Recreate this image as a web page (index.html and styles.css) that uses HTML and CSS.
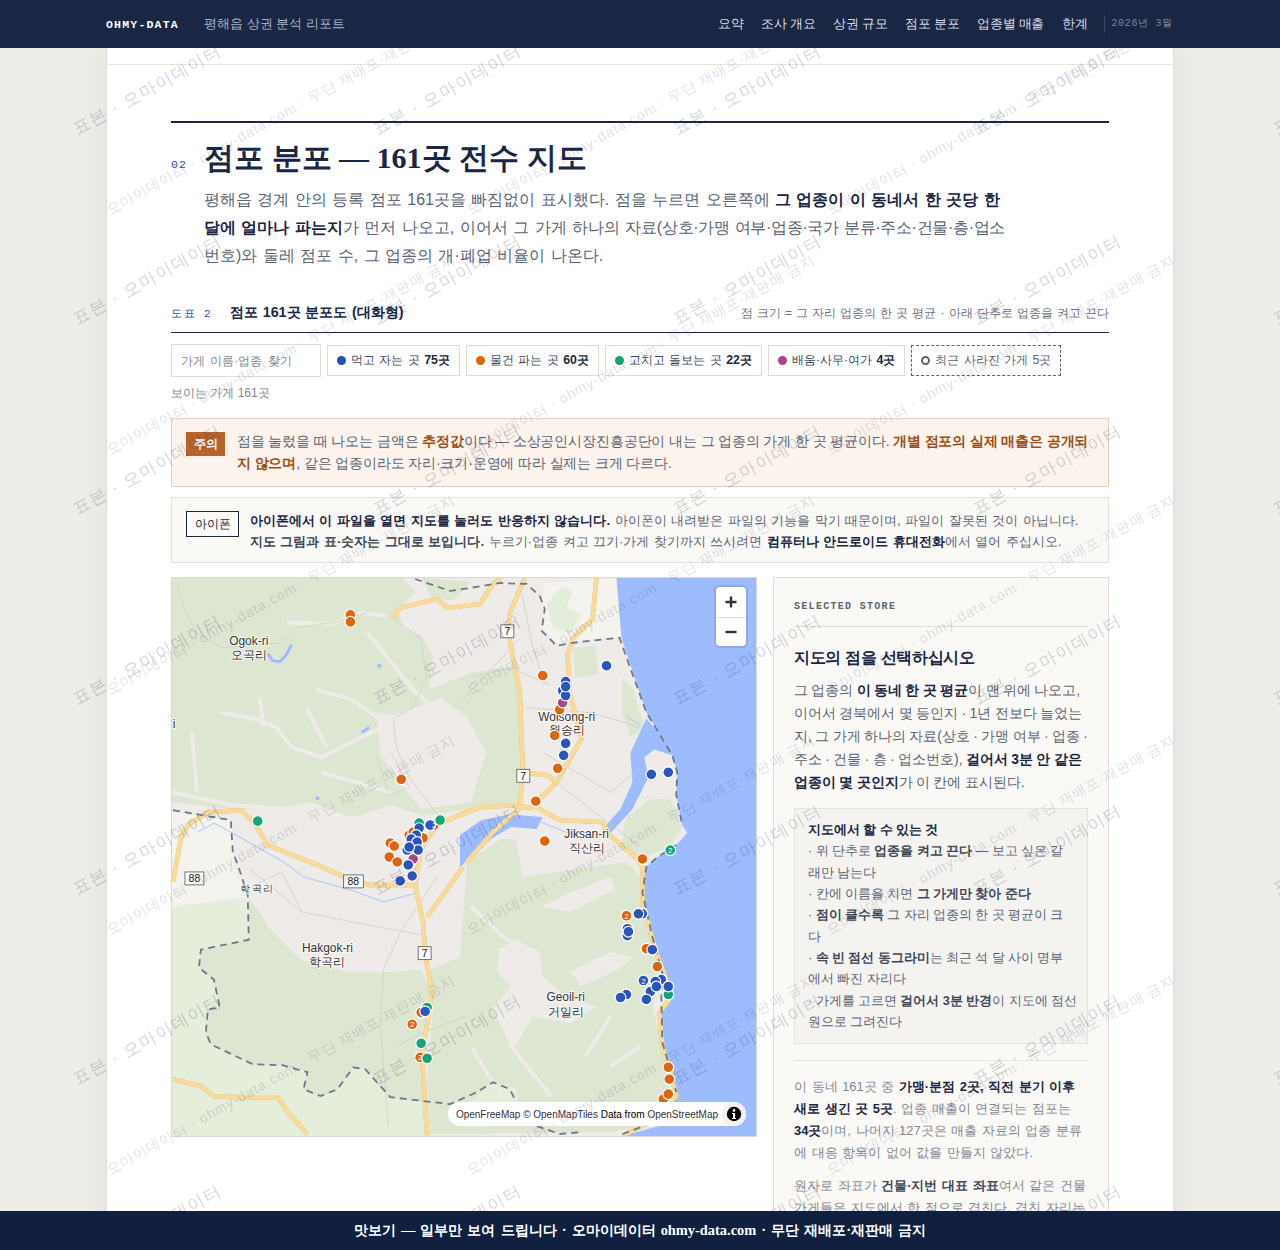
FILE: index.html
```html
<!DOCTYPE html>
<html lang="ko">
<head>
    <meta charset="UTF-8">
    <meta name="viewport" content="width=device-width, initial-scale=1.0">
    <title>평해읍 상권 분석 리포트</title>
    <link rel="stylesheet" href="styles.css">
</head>
<body>
    <header class="topbar">
        <div class="topbar-inner">
            <span class="brand">OHMY-DATA</span>
            <span class="report-name">평해읍 상권 분석 리포트</span>
            <nav class="topnav">
                <a href="#">요약</a>
                <a href="#">조사 개요</a>
                <a href="#">상권 규모</a>
                <a href="#">점포 분포</a>
                <a href="#">업종별 매출</a>
                <a href="#">한계</a>
            </nav>
            <span class="issue-date">2026년 3월</span>
        </div>
    </header>

    <div class="sheet">
        <div class="sheet-strip"></div>
        <main class="section">
            <div class="section-head">
                <span class="section-no">02</span>
                <h1>점포 분포 — 161곳 전수 지도</h1>
            </div>
            <p class="lede">평해읍 경계 안의 등록 점포 161곳을 빠짐없이 표시했다. 점을 누르면 오른쪽에 <b>그 업종이 이 동네서 한 곳당 한 달에 얼마나 파는지</b>가 먼저 나오고, 이어서 그 가게 하나의 <span class="tight">자료(상호·가맹 여부·업종·국가 분류·주소·건물·층·업소</span>번호)와 둘레 점포 수, 그 업종의 개·폐업 비율이 나온다.</p>

            <div class="figure-head">
                <span class="figure-no">도표 2</span>
                <span class="figure-title">점포 161곳 분포도 (대화형)</span>
                <span class="figure-note">점 크기 = 그 자리 업종의 한 곳 평균 · 아래 단추로 업종을 켜고 끈다</span>
            </div>

            <div class="filters">
                <input class="search" type="text" placeholder="가게 이름·업종 찾기">
                <button class="chip" type="button"><i class="swatch blue"></i>먹고 자는 곳 <b>75곳</b></button>
                <button class="chip" type="button"><i class="swatch orange"></i>물건 파는 곳 <b>60곳</b></button>
                <button class="chip" type="button"><i class="swatch green"></i>고치고 돌보는 곳 <b>22곳</b></button>
                <button class="chip" type="button"><i class="swatch purple"></i>배움·사무·여가 <b>4곳</b></button>
                <button class="chip chip-closed" type="button"><i class="swatch ring"></i>최근 사라진 가게 5곳</button>
            </div>
            <p class="visible-count">보이는 가게 161곳</p>

            <div class="notice notice-warn">
                <span class="tag tag-warn">주의</span>
                <p>점을 눌렀을 때 나오는 금액은 <b>추정값</b>이다 — 소상공인시장진흥공단이 내는 그 업종의 가게 한 곳 평균이다. <b>개별 점포의 실제 매출은 공개되지 않으며</b>, 같은 업종이라도 자리·크기·운영에 따라 실제는 크게 다르다.</p>
            </div>
            <div class="notice notice-plain">
                <span class="tag tag-plain">아이폰</span>
                <p><b>아이폰에서 이 파일을 열면 지도를 눌러도 반응하지 않습니다.</b> 아이폰이 내려받은 파일의 기능을 막기 때문이며, 파일이 잘못된 것이 아닙니다. <b class="soft">지도 그림과 표·숫자는 그대로 보입니다.</b> 누르기·업종 켜고 끄기·가게 찾기까지 쓰시려면 <b>컴퓨터나 안드로이드 휴대전화</b>에서 열어 주십시오.</p>
            </div>

            <div class="map-row">
                <div class="map">
                    <svg class="map-canvas" viewBox="0 0 586 560" preserveAspectRatio="none" aria-label="평해읍 점포 지도">
                        <rect width="586" height="560" fill="#eeebe8"/>
                        <!-- land -->
                        <polygon class="pale" points="0,235 60,243 62,290 76,320 0,335"/>
                        <polygon class="pale" points="372,5 422,2 446,1 451,58 402,64 386,66 372,50"/>
                        <polygon class="meadow" points="376,25 392,8 402,14 396,30 412,36 400,55 382,50"/>
                        <polygon class="forest" points="0,0 232,0 244,14 226,32 232,50 250,58 262,78 258,112 300,95 345,88 352,150 356,195 350,225 300,232 250,238 220,228 180,240 140,225 100,232 60,232 0,225"/>
                        <polygon class="forest" points="250,0 300,4 282,22 262,22"/>
                        <polygon class="forest" points="402,70 425,68 428,96 405,100"/>
                        <polygon class="forest" points="452,100 462,110 474,150 460,160 452,135"/>
                        <polygon class="forest" points="456,240 480,222 500,222 512,250 500,270 470,282 450,270"/>
                        <polygon class="forest" points="296,285 330,262 345,262 352,300 420,290 456,285 470,300 472,330 486,376 490,400 482,430 492,470 500,510 470,550 440,556 289,558 258,558 256,500 262,430 256,395 289,380"/>
                        <polygon class="meadow" points="0,330 76,320 77,363 29,373 27,391 42,403 48,431 36,433 34,456 39,468 81,488 136,496 132,513 149,520 166,513 182,491 194,493 219,521 258,528 258,560 0,560"/>
                        <polygon class="forest" points="77,320 99,353 129,383 179,396 212,396 250,393 262,420 251,480 256,527 219,521 194,493 182,491 166,513 149,520 132,513 136,496 111,489 81,488 39,468 34,456 36,433 48,431 42,403 27,391 29,373 77,363"/>
                        <polygon class="meadow" points="296,530 320,505 345,512 350,545 300,552"/>
                        <polygon class="bare" points="328,372 345,363 369,375 372,400 395,420 425,430 400,447 362,440 342,475 322,432 340,410 326,395"/>
                        <polygon class="bare" points="205,135 225,138 270,120 296,140 315,175 300,225 250,232 225,200 210,180"/>
                        <polygon class="bare" points="400,395 440,375 462,380 450,392 410,410"/>
                        <polygon class="bare" points="370,330 400,315 440,300 445,312 400,335"/>
                        <polyline class="valley" points="50,135 85,142 105,150 120,170 150,180 200,155 215,150"/>
                        <polyline class="valley" points="145,112 180,122 215,146"/>
                        <polyline class="valley" points="0,215 60,228 120,232"/>
                        <polyline class="valley" points="115,45 160,46 190,35 215,38"/>
                        <polyline class="valley" points="196,55 240,110 262,130"/>
                        <polyline class="valley" points="20,155 25,215"/>
                        <polyline class="valley" points="88,120 92,150"/>
                        <polyline class="valley" points="135,130 155,170"/>
                        <polyline class="valley" points="150,195 220,215"/>
                        <polyline class="valley" points="300,330 360,385 340,470 380,520"/>
                        <polyline class="valley" points="440,440 415,480"/>
                        <polyline class="valley" points="470,470 440,490"/>
                        <polyline class="valley" points="300,470 330,520"/>
                        <!-- water -->
                        <polygon class="water" points="446,0 586,0 586,560 452,560 489,550 506,520 502,500 492,466 491,433 502,416 492,396 482,360 472,316 476,290 486,281 506,268 517,256 512,248 506,218 507,195 502,178 476,135 451,60"/>
                        <polygon class="water" points="289,258 310,243 340,237 372,240 366,252 340,250 320,262 300,280 289,290"/>
                        <polygon class="water" points="476,141 492,160 502,178 484,172 474,180 478,200 462,232 440,256 432,252 450,232 462,205 460,175"/>
                        <polyline class="water-line med" points="96,76 101,83 108,84 114,78 120,67"/>
                        <polyline class="water-line" points="26,255 42,246 59,255 112,285 132,300 179,313 212,325 246,316"/>
                        <polyline class="water-line" points="370,245 395,255 432,258"/>
                        <polyline class="water-line" points="456,138 470,148"/>
                        <polyline class="water-line med" points="190,155 198,150"/>
                        <circle cx="208" cy="88" r="2" fill="#9dbcff"/>
                        <circle cx="146" cy="221" r="2" fill="#9dbcff"/>
                        <!-- small roads -->
                        <g class="lane">
                            <polyline points="5,5 12,30 25,55 50,70 110,65 125,50 165,44 195,35"/>
                            <polyline points="222,42 250,60 255,100 242,130 222,142 225,170 238,200 268,240"/>
                            <polyline points="205,178 218,218 238,210 220,175"/>
                            <polyline points="266,300 229,356 212,393 209,450 217,550"/>
                            <polyline points="79,293 130,335 180,345 250,358"/>
                            <polyline points="80,310 110,295 130,335"/>
                            <polyline points="300,100 340,90 380,108"/>
                            <polyline points="355,130 420,135 470,150"/>
                            <polyline points="372,175 440,215 465,195"/>
                            <polyline points="385,205 470,270"/>
                            <polyline points="225,470 255,455 295,440"/>
                            <polyline points="350,10 362,70 372,100"/>
                            <polyline points="289,125 350,60"/>
                        </g>
                        <!-- main roads -->
                        <g class="road">
                            <polyline points="354,0 339,35 337,53 349,115 352,195 349,231 322,255 296,285"/>
                            <polyline points="292,290 256,340"/>
                            <polyline points="146,288 173,300 196,308 244,308 252,346 254,378 261,416 251,480 256,560"/>
                            <polyline points="1,305 9,261 16,248 36,235 69,233 82,245 96,268 146,288"/>
                            <polyline points="222,40 229,30 266,21 276,30 309,26 322,6 330,0"/>
                            <polyline points="299,233 266,248 250,272 244,308"/>
                            <polyline points="426,0 422,41 402,61 397,78 399,115 411,161 386,205 362,228 389,243 432,245 439,258 466,281 472,290 472,326 486,376 496,403 499,423 489,436 492,470 502,503 506,520 479,546 452,560"/>
                            <polyline points="352,195 377,198 386,206"/>
                            <polyline points="289,238 309,230 342,228 362,231"/>
                            <polyline points="1,503 29,510 42,520 69,521 106,521 116,536 136,558"/>
                        </g>
                        <!-- boundary -->
                        <g class="boundary">
                            <polyline points="244,1 279,13 299,10 329,5 356,6 369,18 374,31 371,53 386,68 402,65 449,60 476,135 502,178 507,195 506,218 512,248"/>
                            <polyline points="506,268 486,281 476,290 472,316 482,360 492,396 491,420 492,466 502,500 506,516"/>
                            <polyline points="1,233 59,243 61,275 66,288 76,318 77,363 29,373 27,391 42,403 48,431 36,433 34,456 39,468 81,488 111,489 136,496 132,513 149,520 166,513 182,491 194,493 219,521 279,528 306,516 322,506 339,513 345,525"/>
                            <polyline points="366,550 389,558 412,556"/>
                            <polyline points="452,558 479,548"/>
                        </g>
                        <!-- place names -->
                        <g class="place">
                            <text x="2" y="151">i</text>
                            <text x="77" y="67">Ogok-ri</text><text x="77" y="81">오곡리</text>
                            <text x="396" y="144">Wolsong-ri</text><text x="396" y="157">월송리</text>
                            <text x="416" y="261">Jiksan-ri</text><text x="416" y="275">직산리</text>
                            <text x="156" y="375">Hakgok-ri</text><text x="156" y="389">학곡리</text>
                            <text class="small" x="86" y="315">학곡리</text>
                            <text x="395" y="425">Geoil-ri</text><text x="395" y="440">거일리</text>
                        </g>
                        <!-- road shields -->
                        <g class="shield">
                            <rect x="330" y="47" width="13" height="13"/><text x="336.5" y="57.5">7</text>
                            <rect x="346" y="192" width="13" height="13"/><text x="352.5" y="202.5">7</text>
                            <rect x="247" y="370" width="13" height="13"/><text x="253.5" y="380.5">7</text>
                            <rect x="13" y="295" width="19" height="13"/><text x="22.5" y="305.5">88</text>
                            <rect x="172" y="298" width="20" height="13"/><text x="182" y="308.5">88</text>
                        </g>
                        <!-- stores -->
                        <g class="dots orange">
                            <circle cx="179" cy="37" r="5"/><circle cx="179" cy="44" r="5"/><circle cx="230" cy="202" r="5"/>
                            <circle cx="372" cy="98" r="5"/><circle cx="389" cy="132" r="5"/><circle cx="384" cy="158" r="5"/>
                            <circle cx="387" cy="191" r="5"/><circle cx="365" cy="224" r="5"/><circle cx="374" cy="264" r="5"/>
                            <circle cx="472" cy="282" r="5"/><circle cx="238" cy="258" r="5"/><circle cx="252" cy="261" r="5"/>
                            <circle cx="219" cy="266" r="5"/><circle cx="223" cy="269" r="5"/><circle cx="218" cy="280" r="5"/>
                            <circle cx="226" cy="285" r="5"/><circle cx="263" cy="248" r="5"/><circle cx="250" cy="436" r="5"/>
                            <circle cx="241" cy="448" r="5"/><circle cx="249" cy="481" r="5"/><circle cx="456" cy="339" r="5"/>
                            <circle cx="476" cy="372" r="5"/><circle cx="487" cy="390" r="5"/><circle cx="498" cy="491" r="5"/>
                            <circle cx="499" cy="503" r="5"/><circle cx="493" cy="523" r="5"/><circle cx="498" cy="518" r="5"/>
                            <circle cx="242" cy="255" r="5"/>
                        </g>
                        <g class="dots green">
                            <circle cx="86" cy="244" r="5"/><circle cx="269" cy="243" r="5"/><circle cx="248" cy="246" r="5"/>
                            <circle cx="242" cy="276" r="5"/><circle cx="500" cy="273" r="5"/><circle cx="256" cy="431" r="5"/>
                            <circle cx="250" cy="467" r="5"/><circle cx="256" cy="482" r="5"/><circle cx="498" cy="418" r="5"/>
                        </g>
                        <g class="dots purple">
                            <circle cx="392" cy="125" r="5"/><circle cx="242" cy="282" r="5"/>
                        </g>
                        <g class="dots blue">
                            <circle cx="436" cy="88" r="5"/><circle cx="395" cy="104" r="5"/><circle cx="392" cy="113" r="5"/>
                            <circle cx="395" cy="118" r="5"/><circle cx="395" cy="109" r="5"/><circle cx="395" cy="166" r="5"/>
                            <circle cx="393" cy="178" r="5"/><circle cx="481" cy="197" r="5"/><circle cx="498" cy="195" r="5"/>
                            <circle cx="259" cy="248" r="5"/><circle cx="248" cy="251" r="5"/><circle cx="245" cy="258" r="5"/>
                            <circle cx="240" cy="262" r="5"/><circle cx="246" cy="265" r="5"/><circle cx="236" cy="273" r="5"/>
                            <circle cx="247" cy="273" r="5"/><circle cx="238" cy="270" r="5"/><circle cx="237" cy="288" r="5"/>
                            <circle cx="241" cy="299" r="5"/><circle cx="229" cy="304" r="5"/><circle cx="254" cy="435" r="5"/>
                            <circle cx="472" cy="337" r="5"/><circle cx="468" cy="337" r="5"/><circle cx="457" cy="352" r="5"/>
                            <circle cx="457" cy="359" r="5"/><circle cx="458" cy="355" r="5"/><circle cx="482" cy="373" r="5"/>
                            <circle cx="473" cy="404" r="5"/><circle cx="491" cy="403" r="5"/><circle cx="485" cy="405" r="5"/>
                            <circle cx="480" cy="415" r="5"/><circle cx="498" cy="410" r="5"/><circle cx="486" cy="410" r="5"/>
                            <circle cx="456" cy="418" r="5"/><circle cx="450" cy="421" r="5"/><circle cx="476" cy="423" r="5"/>
                        </g>
                        <g class="dot-count">
                            <text x="263" y="251">2</text><text x="241" y="451">2</text><text x="456" y="342">2</text>
                            <text x="473" y="407">2</text><text x="500" y="276">2</text><text x="249" y="484">2</text>
                        </g>
                    </svg>
                    <div class="zoom-control">
                        <button type="button" aria-label="확대"><svg viewBox="0 0 14 14"><path d="M7 1.5v11M1.5 7h11"/></svg></button>
                        <button type="button" aria-label="축소"><svg viewBox="0 0 14 14"><path d="M1.5 7h11"/></svg></button>
                    </div>
                    <div class="attribution">
                        <span>OpenFreeMap © OpenMapTiles <em>Data from</em> OpenStreetMap</span>
                        <span class="info"><svg viewBox="0 0 16 16"><circle cx="8" cy="8" r="7.2" fill="#000"/><circle cx="8" cy="4.4" r="1.3" fill="#fff"/><path d="M6 6.900h3v5h1v1.100H6v-1.100h1V8H6z" fill="#fff"/></svg></span>
                    </div>
                </div>

                <aside class="store-panel">
                    <div class="panel-label">SELECTED STORE</div>
                    <h3>지도의 점을 선택하십시오</h3>
                    <p class="panel-lead">그 업종의 <b>이 동네 한 곳 평균</b>이 맨 위에 나오고, 이어서 경북에서 몇 등인지 · 1년 전보다 늘었는지, 그 가게 하나의 자료(상호 · 가맹 여부 · 업종 · 주소 · 건물 · 층 · 업소번호), <b>걸어서 3분 안 같은 업종이 몇 곳인지</b>가 이 칸에 표시된다.</p>
                    <div class="howto">
                        <strong>지도에서 할 수 있는 것</strong>
                        <div>· 위 단추로 <b>업종을 켜고 끈다</b> — 보고 싶은 갈래만 남는다</div>
                        <div>· 칸에 이름을 치면 <b>그 가게만 찾아 준다</b></div>
                        <div>· <b>점이 클수록</b> 그 자리 업종의 한 곳 평균이 크다</div>
                        <div>· <b>속 빈 점선 동그라미</b>는 최근 석 달 사이 명부에서 빠진 자리다</div>
                        <div class="howto-last">· 가게를 고르면 <b>걸어서 3분 반경</b>이 지도에 점선 원으로 그려진다</div>
                    </div>
                    <div class="panel-notes">
                        <p>이 동네 161곳 중 <b>가맹·분점 2곳, 직전 분기 이후 새로 생긴 곳 5곳</b>. 업종 매출이 연결되는 점포는 <b>34곳</b>이며, 나머지 127곳은 매출 자료의 업종 분류에 대응 항목이 없어 값을 만들지 않았다.</p>
                        <p>원자로 좌표가 <b class="soft">건물·지번 대표 좌표</b>여서 같은 건물 가게들은 지도에서 한 점으로 겹친다. 겹친 자리는 숫자로 표시된다.</p>
                    </div>
                </aside>
            </div>
        </main>
    </div>

    <!-- sample watermark: the big line runs over the whole page, the small one only over the sheet -->
    <svg class="watermark" width="1280" height="1250" aria-hidden="true">
        <defs>
            <pattern id="markLarge" x="70" y="15" width="300" height="190" patternUnits="userSpaceOnUse">
                <text class="mark-large" transform="translate(7 120) rotate(-29)">표본 · 오마이데이터</text>
            </pattern>
            <pattern id="markSmall" x="107" y="-20" width="360" height="240" patternUnits="userSpaceOnUse">
                <text class="mark-small" transform="translate(3 235) rotate(-29)">오마이데이터 · ohmy-data.com · 무단 재배포·재판매 금지</text>
            </pattern>
        </defs>
        <rect width="1280" height="1250" fill="url(#markLarge)"/>
        <rect x="107" width="1066" height="1250" fill="url(#markSmall)"/>
    </svg>

    <footer class="sample-bar">맛보기 — 일부만 보여 드립니다 · 오마이데이터 ohmy-data.com · 무단 재배포·재판매 금지</footer>
</body>
</html>
```

FILE: styles.css
```css
* {
    margin: 0;
    padding: 0;
    box-sizing: border-box;
}

body {
    background-color: #eeede8;
    color: #1a2744;
    font-family: 'Liberation Sans', sans-serif;
    height: 1250px;
    overflow: hidden;
}

b, strong {
    color: #1a2744;
    font-weight: 700;
}

b.soft {
    color: #3d4759;
}

/* top bar */
.topbar {
    position: relative;
    z-index: 20;
    height: 48px;
    background-color: #1a2744;
}

.topbar-inner {
    display: flex;
    align-items: center;
    height: 100%;
    margin: 0 auto;
    padding: 0 107px 0 106px;
}

.brand {
    width: 98px;
    color: #ffffff;
    font-family: 'Liberation Mono', monospace;
    font-size: 11.5px;
    font-weight: 700;
    letter-spacing: 1.2px;
}

.report-name {
    color: #a9b3c6;
    font-size: 13px;
}

.topnav {
    display: flex;
    gap: 18px;
    margin-left: auto;
}

.topnav a {
    color: #d8dde8;
    font-size: 12.5px;
    letter-spacing: -0.3px;
    text-decoration: none;
}

.issue-date {
    margin-left: 17px;
    padding-left: 6px;
    border-left: 1px solid #3a4766;
    color: #78859f;
    font-family: 'Liberation Mono', monospace;
    font-size: 10px;
    letter-spacing: 0.7px;
    line-height: 18px;
    white-space: nowrap;
}

/* page sheet */
.sheet {
    width: 1068px;
    height: 1202px;
    margin: 0 auto;
    overflow: hidden;
    background-color: #ffffff;
    border-left: 1px solid #e0ddd4;
    border-right: 1px solid #e0ddd4;
    box-shadow: 0 0 28px rgba(26, 39, 68, 0.06);
}

.sheet-strip {
    height: 17px;
    border-bottom: 1px solid #e8e4da;
}

.section {
    margin: 56px 64px 0;
    border-top: 2px solid #1a2744;
}

.section-head {
    display: flex;
    align-items: baseline;
    margin-top: 13px;
}

.section-no {
    width: 33px;
    color: #2350b8;
    font-family: 'Liberation Mono', monospace;
    font-size: 11.5px;
    letter-spacing: 1px;
}

h1 {
    color: #1a2744;
    font-family: 'Liberation Serif', serif;
    font-size: 30px;
    font-weight: 700;
    line-height: 44px;
}

.lede {
    width: 803px;
    margin: 6px 0 0 33px;
    color: #5a6475;
    font-size: 16px;
    line-height: 28px;
    word-spacing: 1px;
}

.tight {
    letter-spacing: -0.32px;
}

/* figure heading */
.figure-head {
    display: flex;
    align-items: baseline;
    margin-top: 33px;
    padding-bottom: 10px;
    border-bottom: 1px solid #1a2744;
}

.figure-no {
    width: 59px;
    color: #2350b8;
    font-family: 'Liberation Mono', monospace;
    font-size: 11px;
    letter-spacing: 1.5px;
}

.figure-title {
    font-size: 14.3px;
    font-weight: 700;
    word-spacing: 0.75px;
}

.figure-note {
    margin-left: auto;
    color: #6b7280;
    font-size: 12px;
    word-spacing: 0.75px;
}

/* filter row */
.filters {
    display: flex;
    align-items: center;
    gap: 6px;
    margin-top: 11px;
}

.search {
    width: 150px;
    height: 33px;
    padding: 0 9px;
    background: #ffffff;
    border: 1px solid #e0dcd2;
    color: #1a2744;
    font-family: inherit;
    font-size: 12.2px;
    word-spacing: 2px;
}

.search::placeholder {
    color: #7f8793;
}

.chip {
    display: flex;
    align-items: center;
    height: 31px;
    padding: 0 9px;
    background: #ffffff;
    border: 1px solid #e0dcd2;
    color: #3d4759;
    font-family: inherit;
    font-size: 12.3px;
    white-space: pre;
    word-spacing: 1px;
}

.chip-closed {
    border: 1px dashed #5a6475;
    color: #5a6475;
}

.swatch {
    width: 9px;
    height: 9px;
    margin-right: 5px;
    border-radius: 50%;
}

.swatch.blue { background-color: #2350b8; }
.swatch.orange { background-color: #dc6510; }
.swatch.green { background-color: #14a478; }
.swatch.purple { background-color: #a8458c; }

.swatch.ring {
    border: 2px solid #5a6475;
}

.visible-count {
    margin-top: 7px;
    color: #7f8793;
    font-size: 12px;
    line-height: 18px;
}

/* notices */
.notice {
    display: flex;
    align-items: flex-start;
    margin-top: 16px;
    padding: 12px 14px 11px;
    font-size: 13.8px;
    line-height: 22px;
}

.notice-warn {
    background-color: #fbf3ec;
    border: 1px solid #e6cdb4;
    color: #5a6475;
    letter-spacing: -0.12px;
}

.notice-warn b {
    color: #9a4f18;
}

.notice-plain {
    margin-top: 10px;
    padding-top: 12px;
    padding-bottom: 10px;
    background-color: #faf9f6;
    border: 1px solid #e4e1d8;
    color: #5a6475;
    font-size: 13.3px;
    line-height: 21px;
    word-spacing: 0.8px;
}

.tag {
    flex: none;
    text-align: center;
    font-size: 12px;
    letter-spacing: 0;
    word-spacing: 0;
}

.tag-warn {
    width: 39px;
    height: 24px;
    margin: 1px 12px 0 0;
    background-color: #b8622c;
    color: #ffffff;
    font-weight: 700;
    line-height: 24px;
}

.tag-plain {
    width: 53px;
    height: 26px;
    margin: 1px 11px 0 0;
    border: 1px solid #1a2744;
    color: #1a2744;
    line-height: 24px;
}

/* map + side panel */
.map-row {
    display: grid;
    grid-template-columns: 586px 336px;
    gap: 16px;
    align-items: start;
    margin-top: 14px;
}

.map {
    position: relative;
    height: 560px;
    border: 1px solid #dbd8d0;
    overflow: hidden;
}

.map-canvas {
    display: block;
    width: 100%;
    height: 100%;
}

.forest { fill: #dde6d1; }
.meadow { fill: #e4eeda; }
.pale { fill: #f5f3ee; }
.bare { fill: #eeebe8; }
.water { fill: #9dbcff; }

.valley {
    fill: none;
    stroke: #eeebe8;
    stroke-width: 4;
}

.water-line {
    fill: none;
    stroke: #a9c4fb;
    stroke-width: 1;
}

.water-line.med {
    stroke: #9dbcff;
    stroke-width: 3;
}

.lane polyline {
    fill: none;
    stroke: #d2cec9;
    stroke-width: 0.8;
}

.road polyline {
    fill: none;
    stroke: #f6db9a;
    stroke-width: 4.5;
    stroke-linejoin: round;
    filter: drop-shadow(0 0 0.6px #e2a860);
}

.boundary polyline {
    fill: none;
    stroke: #6d7888;
    stroke-width: 1.8;
    stroke-dasharray: 7 5;
}

.place text {
    fill: #333333;
    font-size: 12px;
    text-anchor: middle;
    stroke: rgba(255, 255, 255, 0.75);
    stroke-width: 2px;
    paint-order: stroke;
}

.place text.small {
    font-size: 10px;
    letter-spacing: 1.5px;
}

.shield rect {
    fill: #fafafa;
    stroke: #555555;
    stroke-width: 0.8;
}

.shield text {
    fill: #222222;
    font-family: 'Liberation Sans', sans-serif;
    font-size: 10.5px;
    text-anchor: middle;
}

.dots circle {
    r: 5.4px;
    stroke: #ffffff;
    stroke-width: 1.2;
}

.dots.blue circle { fill: #2a55bd; }
.dots.orange circle { fill: #dc6510; }
.dots.green circle { fill: #14a478; }
.dots.purple circle { fill: #a8458c; }

.dot-count text {
    fill: #ffffff;
    font-family: 'Liberation Sans', sans-serif;
    font-size: 8px;
    text-anchor: middle;
}

.zoom-control {
    position: absolute;
    top: 9px;
    right: 10px;
    width: 30px;
    background: #ffffff;
    border-radius: 4px;
    box-shadow: 0 0 0 2px rgba(0, 0, 0, 0.1);
}

.zoom-control button {
    display: block;
    width: 30px;
    height: 29.500px;
    background: none;
    border: none;
}

.zoom-control button + button {
    border-top: 1px solid #dddddd;
}

.zoom-control svg {
    display: block;
    width: 14px;
    height: 14px;
    margin: 0 auto;
    fill: none;
    stroke: #333333;
    stroke-width: 2.4;
}

.attribution {
    position: absolute;
    right: 10px;
    bottom: 10px;
    display: flex;
    align-items: center;
    height: 24px;
    padding-left: 8px;
    background: #ffffff;
    border-radius: 12px;
    color: #333333;
    font-family: 'Liberation Sans', sans-serif;
    font-size: 10px;
}

.attribution em {
    color: #000000;
    font-style: normal;
}

.info {
    display: flex;
    align-items: center;
    justify-content: center;
    width: 24px;
    height: 24px;
    margin-left: 4px;
    background: #f0f0f0;
    border-radius: 50%;
}

.info svg {
    width: 16px;
    height: 16px;
}

.store-panel {
    padding: 22px 20px 20px;
    min-height: 700px;
    background-color: #faf9f6;
    border: 1px solid #e0dcd2;
}

.panel-label {
    padding-bottom: 12px;
    border-bottom: 1px solid #e0dcd2;
    color: #5a6475;
    font-family: 'Liberation Mono', monospace;
    font-size: 10px;
    font-weight: 700;
    letter-spacing: 1.3px;
    line-height: 14px;
}

h3 {
    margin-top: 19px;
    color: #1a2744;
    font-size: 15.7px;
    font-weight: 700;
    letter-spacing: -0.3px;
    line-height: 24px;
}

.panel-lead {
    margin-top: 9px;
    color: #5a6475;
    font-size: 13.9px;
    line-height: 23px;
    word-spacing: -0.5px;
}

.howto {
    margin-top: 14px;
    padding: 10px 12px 11px 13px;
    background-color: #f4f3f0;
    border: 1px solid #e6e3db;
    color: #5a6475;
    font-size: 12.8px;
    line-height: 21.330px;
    word-spacing: -0.2px;
}

.howto b {
    color: #3d4759;
}

.howto-last {
    margin-right: -3px;
}

.panel-notes {
    margin-top: 16px;
    padding-top: 15px;
    border-top: 1px solid #e6e3db;
    color: #7f8793;
    font-size: 12.9px;
    line-height: 21.760px;
    word-spacing: 1px;
}

.panel-notes p + p {
    margin-top: 12px;
}

/* watermark + sample bar */
.watermark {
    position: fixed;
    top: 0;
    left: 0;
    z-index: 10;
    pointer-events: none;
}

.mark-large {
    fill: rgba(26, 39, 68, 0.2);
    font-size: 17px;
    letter-spacing: 1.5px;
}

.mark-small {
    fill: rgba(26, 39, 68, 0.15);
    font-size: 14px;
    letter-spacing: 1px;
}

.sample-bar {
    position: fixed;
    left: 0;
    right: 0;
    bottom: 0;
    z-index: 20;
    height: 39px;
    background-color: #12203f;
    color: #ffffff;
    font-family: 'Liberation Serif', serif;
    font-size: 14.4px;
    font-weight: 700;
    line-height: 39px;
    text-align: center;
    word-spacing: 1.5px;
}
```
